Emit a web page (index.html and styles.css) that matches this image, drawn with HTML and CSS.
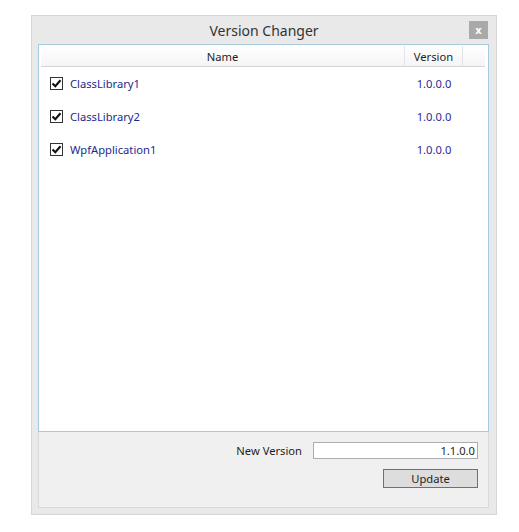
FILE: index.html
```html
<!DOCTYPE html>
<html>
<head>
<meta charset="utf-8">
<link rel="stylesheet" href="styles.css">
</head>
<body>
<div class="window">
  <div class="titlebar">
    <span class="title">Version Changer</span>
    <span class="close">x</span>
  </div>
  <div class="content">
    <div class="list">
      <div class="header">
        <div class="col-name">Name</div>
        <div class="col-version">Version</div>
        <div class="col-fill"></div>
      </div>
      <div class="row">
        <div class="cell-name"><span class="check"><svg viewBox="0 0 11 11" width="11" height="11"><path d="M1.5 5.5 L4.3 8.3 L9.5 2.2" fill="none" stroke="#111" stroke-width="2.1"/></svg></span><span class="proj">ClassLibrary1</span></div>
        <div class="cell-version">1.0.0.0</div>
      </div>
      <div class="row">
        <div class="cell-name"><span class="check"><svg viewBox="0 0 11 11" width="11" height="11"><path d="M1.5 5.5 L4.3 8.3 L9.5 2.2" fill="none" stroke="#111" stroke-width="2.1"/></svg></span><span class="proj">ClassLibrary2</span></div>
        <div class="cell-version">1.0.0.0</div>
      </div>
      <div class="row">
        <div class="cell-name"><span class="check"><svg viewBox="0 0 11 11" width="11" height="11"><path d="M1.5 5.5 L4.3 8.3 L9.5 2.2" fill="none" stroke="#111" stroke-width="2.1"/></svg></span><span class="proj">WpfApplication1</span></div>
        <div class="cell-version">1.0.0.0</div>
      </div>
    </div>
    <div class="footer">
      <div class="field">
        <span class="label">New Version</span>
        <div class="textbox">1.1.0.0</div>
      </div>
      <div class="actions">
        <div class="button">Update</div>
      </div>
    </div>
  </div>
</div>
</body>
</html>
```
FILE: styles.css
```css
html, body {
  margin: 0;
  padding: 0;
  background: #ffffff;
}
body {
  width: 519px;
  height: 532px;
  font-family: "Noto Sans", "Open Sans", sans-serif;
  font-size: 11.2px;
  color: #1e1e1e;
}
.window {
  box-sizing: border-box;
  margin: 15px 0 0 31px;
  width: 466px;
  height: 500px;
  border: 1px solid #d6d6d6;
  background: #e9e9e9;
  display: flex;
  flex-direction: column;
}
.titlebar {
  height: 28px;
  position: relative;
  display: flex;
  align-items: center;
  justify-content: center;
}
.title {
  font-size: 14px;
  color: #333333;
  margin-top: 1px;
}
.close {
  position: absolute;
  top: 5px;
  right: 8px;
  width: 19px;
  height: 18px;
  background: #a9a9a9;
  color: #ffffff;
  font-family: "DejaVu Sans", sans-serif;
  font-weight: bold;
  font-size: 10px;
  display: flex;
  align-items: center;
  justify-content: center;
}
.content {
  margin: 0 7px 6px 6px;
  flex: 1;
  display: flex;
  flex-direction: column;
}
.list {
  box-sizing: border-box;
  height: 388px;
  border: 1px solid #a7c9e0;
  background: #ffffff;
  padding: 1px 3px 0 2px;
}
.header {
  display: flex;
  height: 20px;
  border-bottom: 1px solid #d5d5d5;
  background: linear-gradient(#ffffff, #f4f5f7);
  line-height: 22px;
  color: #1e1e1e;
}
.col-name {
  width: 363px;
  text-align: center;
  border-right: 1px solid #e3e4e6;
}
.col-version {
  width: 57px;
  text-align: center;
  border-right: 1px solid #e3e4e6;
}
.col-fill {
  flex: 1;
}
.row {
  display: flex;
  height: 33px;
  align-items: center;
}
.cell-name {
  width: 364px;
  display: flex;
  align-items: center;
  padding-left: 9px;
  box-sizing: border-box;
}
.check {
  box-sizing: border-box;
  width: 13px;
  height: 13px;
  border: 1px solid #333333;
  background: #ffffff;
  display: flex;
  align-items: center;
  justify-content: center;
  margin-right: 7px;
}
.check svg {
  display: block;
}
.proj {
  color: #1c2a8c;
}
.cell-version {
  width: 58px;
  text-align: center;
  color: #2a2a9a;
}
.footer {
  flex: 1;
  background: #f0f0f0;
  border: 1px solid #d9d9d9;
  border-top: none;
  padding: 10px 10px 0 0;
  display: flex;
  flex-direction: column;
  align-items: flex-end;
}
.field {
  display: flex;
  align-items: center;
}
.label {
  margin-right: 11px;
  color: #1e1e1e;
}
.textbox {
  box-sizing: border-box;
  width: 165px;
  height: 17px;
  border: 1px solid #abadb3;
  background: #ffffff;
  text-align: right;
  padding-right: 2px;
  line-height: 15px;
  color: #1e1e1e;
}
.actions {
  margin-top: 10px;
}
.button {
  box-sizing: border-box;
  width: 95px;
  height: 19px;
  border: 1px solid #707070;
  background: #dddddd;
  text-align: center;
  line-height: 17px;
  color: #1e1e1e;
}
```
